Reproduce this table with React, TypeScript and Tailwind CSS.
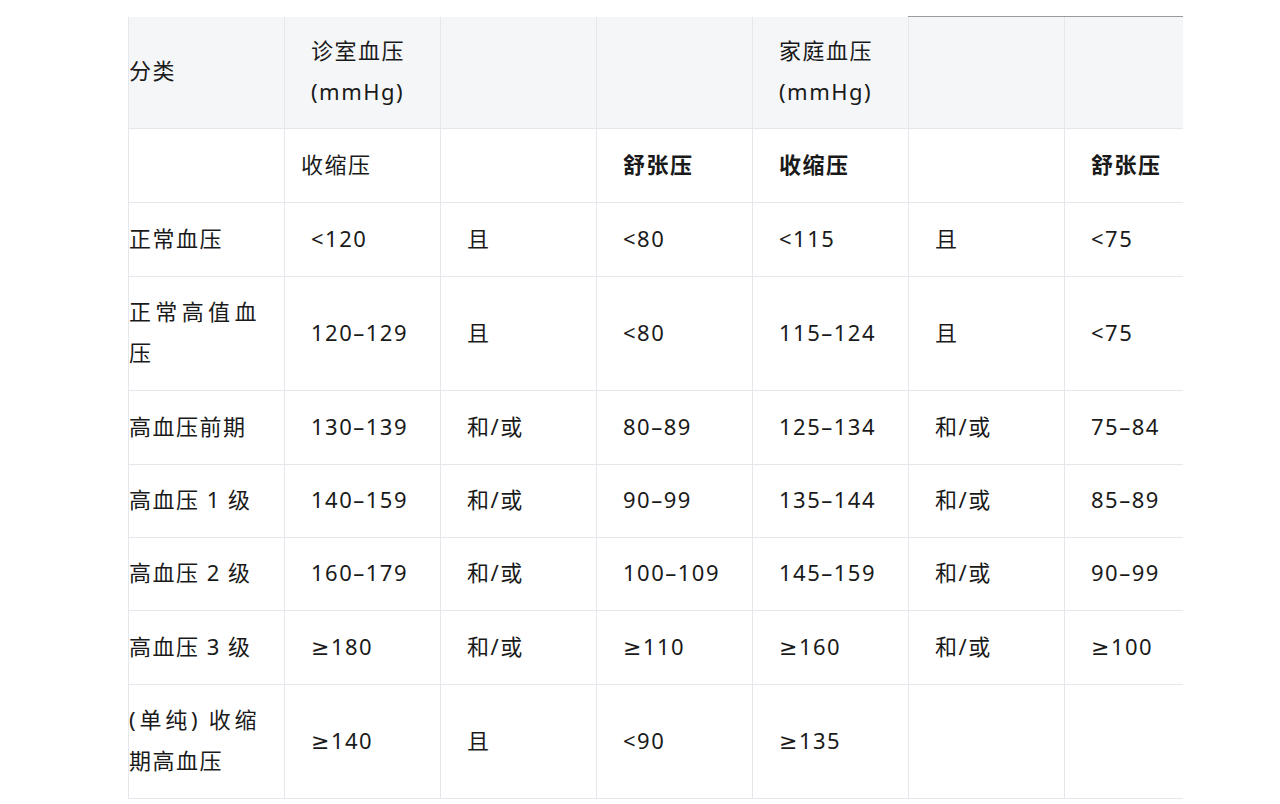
const rows: { name: string; v: string[]; h: string }[] = [
  { name: "正常血压", v: ["<120", "且", "<80", "<115", "且", "<75"], h: "h-[74px]" },
  { name: "正常高值血压", v: ["120–129", "且", "<80", "115–124", "且", "<75"], h: "h-[114px]" },
  { name: "高血压前期", v: ["130–139", "和/或", "80–89", "125–134", "和/或", "75–84"], h: "h-[74px]" },
  { name: "高血压 1 级", v: ["140–159", "和/或", "90–99", "135–144", "和/或", "85–89"], h: "h-[73px]" },
  { name: "高血压 2 级", v: ["160–179", "和/或", "100–109", "145–159", "和/或", "90–99"], h: "h-[73px]" },
  { name: "高血压 3 级", v: ["≥180", "和/或", "≥110", "≥160", "和/或", "≥100"], h: "h-[74px]" },
  { name: "(单纯) 收缩期高血压", v: ["≥140", "且", "<90", "≥135", "", ""], h: "h-[114px]" },
];

const cell = "border-l border-b border-[#e4e7eb] align-middle pl-[26px] pb-[3px] text-left";

export default function App() {
  return (
    <div
      className="min-h-screen bg-white pt-[16px] pl-[128px] text-[22px] leading-[41px] tracking-[1.5px] text-[#1a1a1a]"
      style={{ fontFamily: '"Noto Sans", "DejaVu Sans", "Noto Sans CJK SC", sans-serif' }}
    >
      <table className="table-fixed border-collapse w-[1054px]">
        <colgroup>
          <col className="w-[156px]" />
          <col className="w-[156px]" />
          <col className="w-[156px]" />
          <col className="w-[156px]" />
          <col className="w-[156px]" />
          <col className="w-[156px]" />
          <col className="w-[118px]" />
        </colgroup>
        <tbody>
          <tr className="h-[112px] bg-[#f5f6f8]">
            <td className="border-l border-b border-[#e4e7eb] align-middle pr-[26px] pb-[3px]">分类</td>
            <td className={cell}>
              诊室血压
              <br />
              (mmHg)
            </td>
            <td className={cell}></td>
            <td className={cell}></td>
            <td className={cell}>
              家庭血压
              <br />
              (mmHg)
            </td>
            <td className={cell + " border-t border-t-[#9a9a9a]"}></td>
            <td className={cell + " border-t border-t-[#9a9a9a]"}></td>
          </tr>
          <tr className="h-[74px]">
            <td className="border-l border-b border-[#e4e7eb]"></td>
            <td className="border-l border-b border-[#e4e7eb] align-middle pl-[16px] pb-[3px]">收缩压</td>
            <td className={cell}></td>
            <td className={cell + " font-bold"}>舒张压</td>
            <td className={cell + " font-bold"}>收缩压</td>
            <td className={cell}></td>
            <td className={cell + " font-bold"}>舒张压</td>
          </tr>
          {rows.map((r) => (
            <tr key={r.name} className={r.h}>
              <td className="border-l border-b border-[#e4e7eb] align-middle pr-[26px] pb-[3px] text-justify">
                {r.name}
              </td>
              {r.v.map((x, i) => (
                <td key={i} className={cell}>
                  {x}
                </td>
              ))}
            </tr>
          ))}
        </tbody>
      </table>
    </div>
  );
}
